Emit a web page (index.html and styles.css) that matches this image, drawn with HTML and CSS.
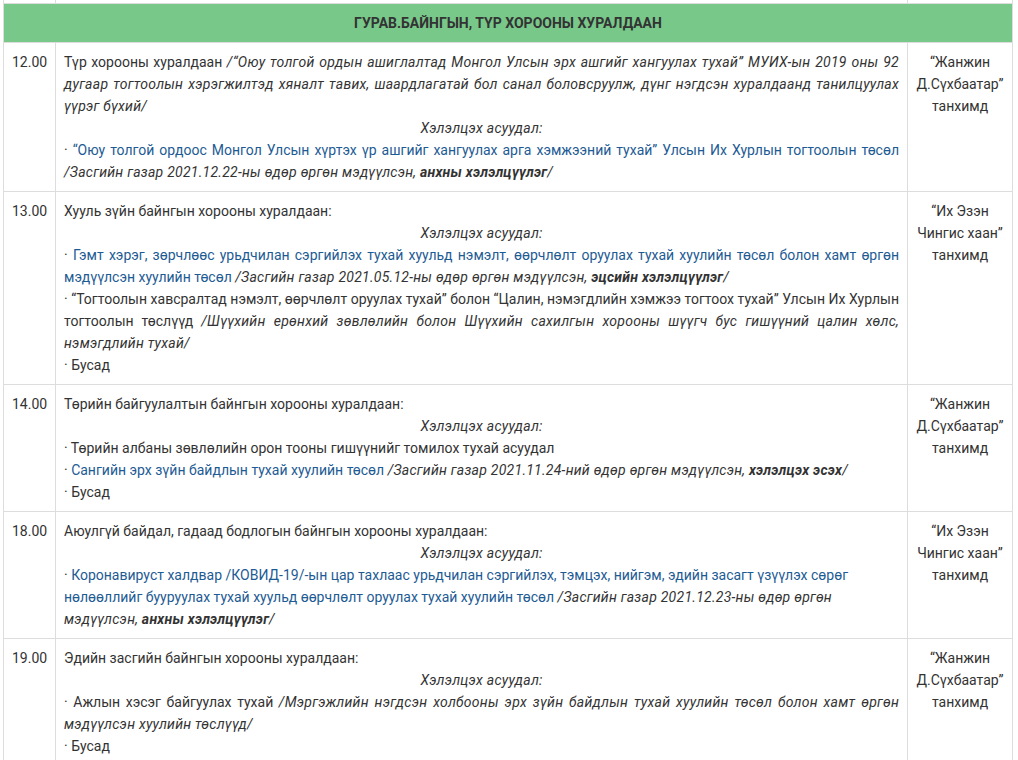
FILE: index.html
```html
<!DOCTYPE html>
<html lang="mn">
<head>
<meta charset="utf-8">
<title>Хуралдаан</title>
<link rel="stylesheet" href="styles.css">
</head>
<body>
<div class="page">
<table class="agenda">
  <colgroup>
    <col class="c-time">
    <col class="c-body">
    <col class="c-room">
  </colgroup>
  <tbody>
    <tr class="stub"><td></td><td></td><td></td></tr>
    <tr class="section"><td colspan="3">ГУРАВ.БАЙНГЫН, ТҮР ХОРООНЫ ХУРАЛДААН</td></tr>
    <tr>
      <td class="time">12.00</td>
      <td class="body">
        <p class="just">Түр хорооны хуралдаан <i><span class="nw">/“Оюу</span> толгой ордын ашиглалтад Монгол Улсын эрх ашгийг хангуулах тухай” МУИХ-ын 2019 оны 92 дугаар тогтоолын хэрэгжилтэд хяналт тавих, шаардлагатай бол санал боловсруулж, дүнг нэгдсэн хуралдаанд танилцуулах үүрэг бүхий/</i></p>
        <p class="topic">Хэлэлцэх асуудал:</p>
        <p class="just">· <a class="lnk">“Оюу толгой ордоос Монгол Улсын хүртэх үр ашгийг хангуулах арга хэмжээний тухай” Улсын Их Хурлын тогтоолын төсөл</a> <i><span class="nw">/Засгийн</span> газар 2021.12.22-ны өдөр өргөн мэдүүлсэн, <b>анхны хэлэлцүүлэг</b>/</i></p>
      </td>
      <td class="room">“Жанжин Д.Сүхбаатар” танхимд</td>
    </tr>
    <tr>
      <td class="time">13.00</td>
      <td class="body">
        <p>Хууль зүйн байнгын хорооны хуралдаан:</p>
        <p class="topic">Хэлэлцэх асуудал:</p>
        <p class="just">· <a class="lnk">Гэмт хэрэг, зөрчлөөс урьдчилан сэргийлэх тухай хуульд нэмэлт, өөрчлөлт оруулах тухай хуулийн төсөл болон хамт өргөн мэдүүлсэн хуулийн төсөл</a> <i><span class="nw">/Засгийн</span> газар 2021.05.12-ны өдөр өргөн мэдүүлсэн, <b>эцсийн хэлэлцүүлэг</b>/</i></p>
        <p class="just">· “Тогтоолын хавсралтад нэмэлт, өөрчлөлт оруулах тухай” болон “Цалин, нэмэгдлийн хэмжээ тогтоох тухай” Улсын Их Хурлын тогтоолын төслүүд <i><span class="nw">/Шүүхийн</span> ерөнхий зөвлөлийн болон Шүүхийн сахилгын хорооны шүүгч бус гишүүний цалин хөлс, нэмэгдлийн тухай/</i></p>
        <p>· Бусад</p>
      </td>
      <td class="room">“Их Эзэн Чингис хаан” танхимд</td>
    </tr>
    <tr>
      <td class="time">14.00</td>
      <td class="body">
        <p>Төрийн байгуулалтын байнгын хорооны хуралдаан:</p>
        <p class="topic">Хэлэлцэх асуудал:</p>
        <p>· Төрийн албаны зөвлөлийн орон тооны гишүүнийг томилох тухай асуудал</p>
        <p>· <a class="lnk">Сангийн эрх зүйн байдлын тухай хуулийн төсөл</a> <i><span class="nw">/Засгийн</span> газар 2021.11.24-ний өдөр өргөн мэдүүлсэн, <b>хэлэлцэх эсэх</b>/</i></p>
        <p>· Бусад</p>
      </td>
      <td class="room">“Жанжин Д.Сүхбаатар” танхимд</td>
    </tr>
    <tr>
      <td class="time">18.00</td>
      <td class="body">
        <p>Аюулгүй байдал, гадаад бодлогын байнгын хорооны хуралдаан:</p>
        <p class="topic">Хэлэлцэх асуудал:</p>
        <p>· <a class="lnk">Коронавируст халдвар /КОВИД-19/-ын цар тахлаас урьдчилан сэргийлэх, тэмцэх, нийгэм, эдийн засагт үзүүлэх сөрөг нөлөөллийг бууруулах тухай хуульд өөрчлөлт оруулах тухай хуулийн төсөл</a> <i><span class="nw">/Засгийн</span> газар 2021.12.23-ны өдөр өргөн мэдүүлсэн, <b>анхны хэлэлцүүлэг</b>/</i></p>
      </td>
      <td class="room">“Их Эзэн Чингис хаан” танхимд</td>
    </tr>
    <tr>
      <td class="time">19.00</td>
      <td class="body">
        <p>Эдийн засгийн байнгын хорооны хуралдаан:</p>
        <p class="topic">Хэлэлцэх асуудал:</p>
        <p class="just">· Ажлын хэсэг байгуулах тухай <i><span class="nw">/Мэргэжлийн</span> нэгдсэн холбооны эрх зүйн байдлын тухай хуулийн төсөл болон хамт өргөн мэдүүлсэн хуулийн төслүүд/</i></p>
        <p>· Бусад</p>
      </td>
      <td class="room">“Жанжин Д.Сүхбаатар” танхимд</td>
    </tr>
  </tbody>
</table>
</div>
</body>
</html>
```

FILE: styles.css
```css
html, body {
  margin: 0;
  padding: 0;
  background: #ffffff;
}

body {
  font-family: Roboto, "Noto Sans", "Liberation Sans", sans-serif;
  font-size: 14px;
  line-height: 22px;
  color: #333333;
  overflow: hidden;
}

.page {
  padding: 0 0 0 3px;
}

.agenda {
  border-collapse: collapse;
  table-layout: fixed;
  width: 1010px;
}

.c-time { width: 52px; }
.c-room { width: 105px; }

.agenda td {
  border: 1px solid #dddddd;
  padding: 8px 8px;
  vertical-align: top;
}

.agenda .stub td {
  border-top: none;
  padding: 0;
  height: 3px;
}

.agenda .section td {
  background: #78c88a;
  font-weight: 700;
  text-align: center;
}

.time {
  text-align: left;
}

.room {
  text-align: center;
}

.body p {
  margin: 0;
}

.body p.just {
  text-align: justify;
}

.body i,
.body p.topic {
  font-style: italic;
  letter-spacing: 0.26px;
}

.body p.topic {
  text-align: center;
}

.nw {
  white-space: nowrap;
}

.lnk {
  color: #1d5b94;
  text-decoration: none;
}

.body i b {
  font-weight: 700;
}
```
